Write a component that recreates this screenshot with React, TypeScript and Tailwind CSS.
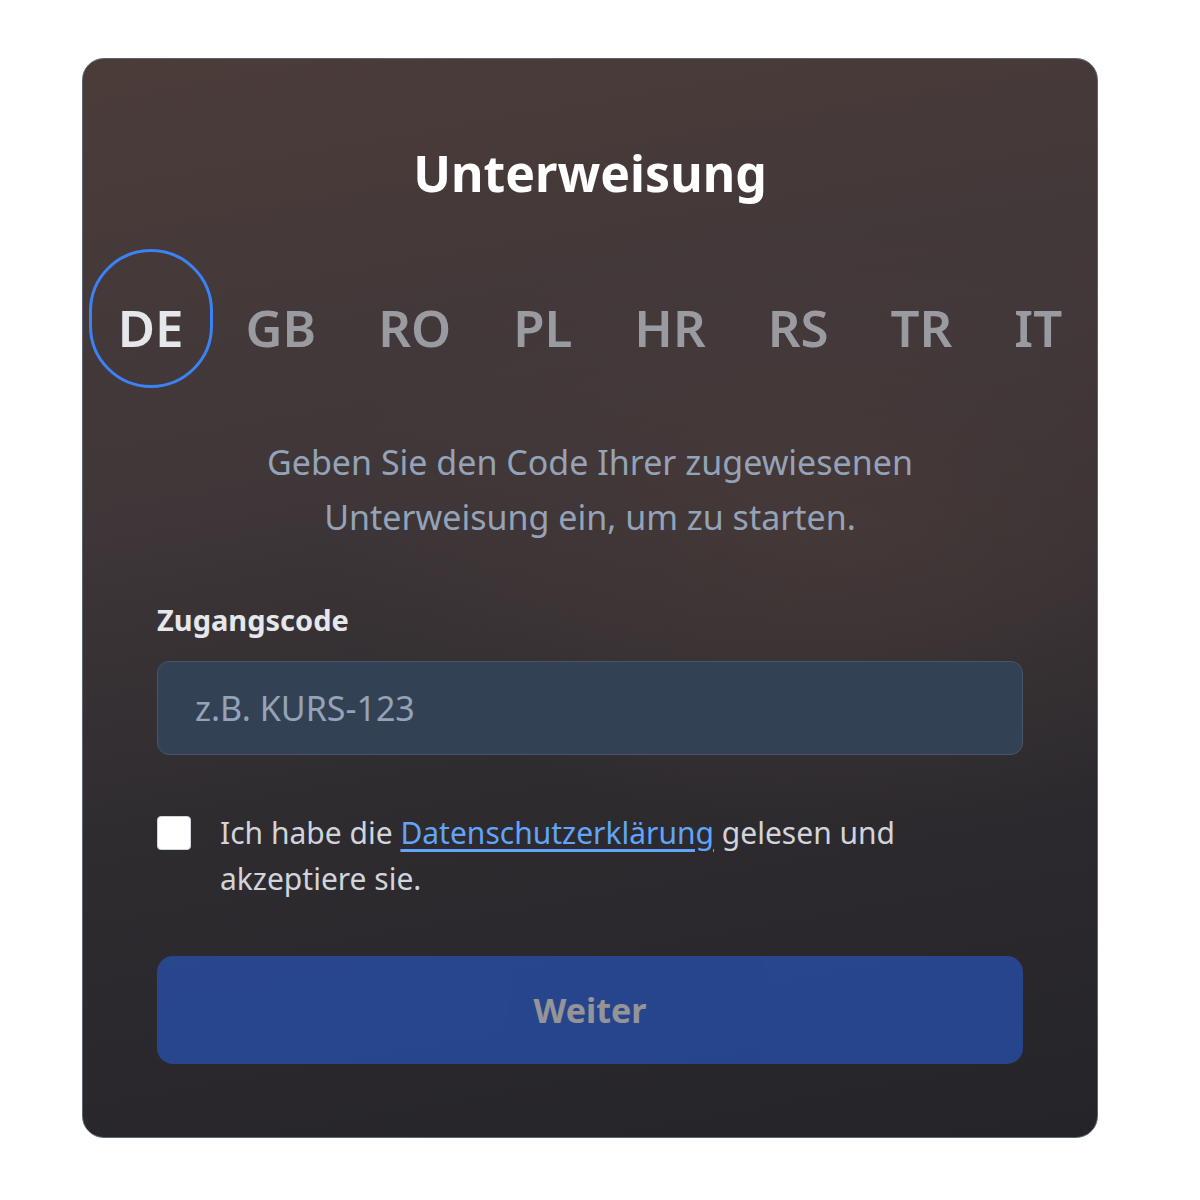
import { useState } from "react";

const languages = ["DE", "GB", "RO", "PL", "HR", "RS", "TR", "IT"];

export default function App() {
  const [lang, setLang] = useState("DE");
  const [accepted, setAccepted] = useState(false);
  const [code, setCode] = useState("");

  return (
    <div className="min-h-[1200px] w-[1200px] bg-white pt-[58px] pl-[82px] font-['Noto_Sans',sans-serif]">
      <div className="w-[1016px] h-[1080px] rounded-[22px] border border-[#5b6472] bg-[radial-gradient(ellipse_520px_300px_at_760px_470px,rgba(80,62,58,0.55),transparent),linear-gradient(170deg,#4b3c39_0%,#403739_35%,#2f2c30_62%,#252429_100%)] px-[74px] pt-[84px]">
        <h1 className="text-center text-[50px] font-bold leading-[60px] text-white">
          Unterweisung
        </h1>

        <div className="mx-[-74px] mt-[46px] flex justify-center gap-[4px]">
          {languages.map((l) => (
            <button
              key={l}
              onClick={() => setLang(l)}
              className={
                l === lang
                  ? "h-[139px] rounded-full border-[3px] border-[#3b82f6] px-[26px] pt-[16px] text-[51px] font-semibold leading-[64px] text-[#e5e7eb]"
                  : "h-[139px] rounded-full border-[3px] border-transparent px-[26px] pt-[16px] text-[51px] font-semibold leading-[64px] text-[#9a9ba1]"
              }
            >
              {l}
            </button>
          ))}
        </div>

        <p className="mt-[47px] text-center text-[34px] leading-[55px] text-[#94a3b8]">
          Geben Sie den Code Ihrer zugewiesenen
          <br />
          Unterweisung ein, um zu starten.
        </p>

        <label className="mt-[55px] block text-[29px] font-bold leading-[40px] text-[#e5e7eb]">
          Zugangscode
        </label>
        <input
          value={code}
          onChange={(e) => setCode(e.target.value)}
          placeholder="z.B. KURS-123"
          className="mt-[21px] h-[94px] w-full rounded-[12px] border border-[#475569] bg-[#334155] px-[37px] text-[34px] text-white outline-none placeholder:text-[#94a3b8]"
        />

        <div className="mt-[55px] flex items-start gap-[29px]">
          <button
            onClick={() => setAccepted(!accepted)}
            className="mt-[6px] h-[34px] w-[34px] shrink-0 rounded-[4px] border border-[#d1d5db] bg-white"
          >
            {accepted && (
              <svg viewBox="0 0 24 24" className="h-full w-full" fill="none" stroke="#2563eb" strokeWidth="3">
                <path d="M5 12l5 5L19 7" />
              </svg>
            )}
          </button>
          <p className="text-[30px] leading-[46px] text-[#d1d5db]">
            Ich habe die{" "}
            <a href="#" className="text-[#60a5fa] underline underline-offset-[5px]">
              Datenschutzerklärung
            </a>{" "}
            gelesen und
            <br />
            akzeptiere sie.
          </p>
        </div>

        <button
          disabled={!accepted || !code}
          className="mt-[54px] h-[108px] w-full rounded-[16px] bg-[#2563eb] text-[34px] font-bold text-white opacity-50"
        >
          Weiter
        </button>
      </div>
    </div>
  );
}
